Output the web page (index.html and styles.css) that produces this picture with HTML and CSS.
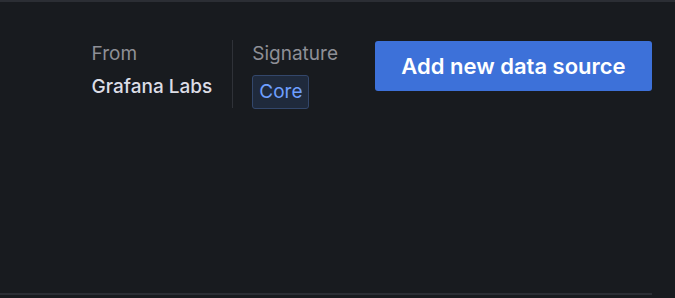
FILE: index.html
```html
<!DOCTYPE html>
<html>
<head>
<meta charset="utf-8">
<link rel="stylesheet" href="styles.css">
</head>
<body>
<div class="page">
  <div class="top-rule"></div>
  <div class="header">
    <div class="info">
      <div class="info-item">
        <div class="label">From</div>
        <div class="value">Grafana Labs</div>
      </div>
      <div class="divider"></div>
      <div class="info-item">
        <div class="label">Signature</div>
        <div class="badge">Core</div>
      </div>
    </div>
    <button class="primary">Add new data source</button>
  </div>
  <div class="spacer"></div>
  <div class="bottom-rule"></div>
</div>
</body>
</html>
```
FILE: styles.css
```css
html, body {
  margin: 0;
  padding: 0;
  background: #181b1f;
  height: 100%;
}
.page {
  height: 298px;
  display: flex;
  flex-direction: column;
  font-family: Inter, "Noto Sans", sans-serif;
  background: #181b1f;
}
.top-rule {
  height: 2px;
  background: #2b2e34;
  flex: none;
}
.header {
  display: flex;
  justify-content: flex-end;
  align-items: flex-start;
  padding: 39px 23px 0 0;
  gap: 37px;
}
.info {
  display: flex;
  align-items: stretch;
  gap: 20px;
  margin-top: -1px;
}
.info-item {
  display: flex;
  flex-direction: column;
  gap: 9px;
  padding-top: 2px;
}
.label {
  color: #8e8f96;
  font-size: 19px;
  line-height: 24px;
}
.value {
  color: #dcdde6;
  font-size: 19px;
  line-height: 24px;
  font-weight: 500;
}
.divider {
  width: 1px;
  background: #2f3238;
  height: 68px;
  margin-right: -1px;
}
.badge {
  align-self: flex-start;
  color: #6e9fff;
  background: #1f2a3c;
  border: 1px solid #33476b;
  border-radius: 3px;
  font-size: 19px;
  line-height: 24px;
  padding: 4px 6px;
}
.primary {
  background: #3d71d9;
  color: #ffffff;
  border: none;
  border-radius: 3px;
  font-family: Inter, "Noto Sans", sans-serif;
  font-size: 22px;
  font-weight: 600;
  height: 50px;
  width: 277px;
  padding: 0;
}
.spacer {
  flex: 1;
}
.bottom-rule {
  height: 2px;
  width: 652px;
  background: #2b2e34;
  margin-bottom: 3px;
}
```
